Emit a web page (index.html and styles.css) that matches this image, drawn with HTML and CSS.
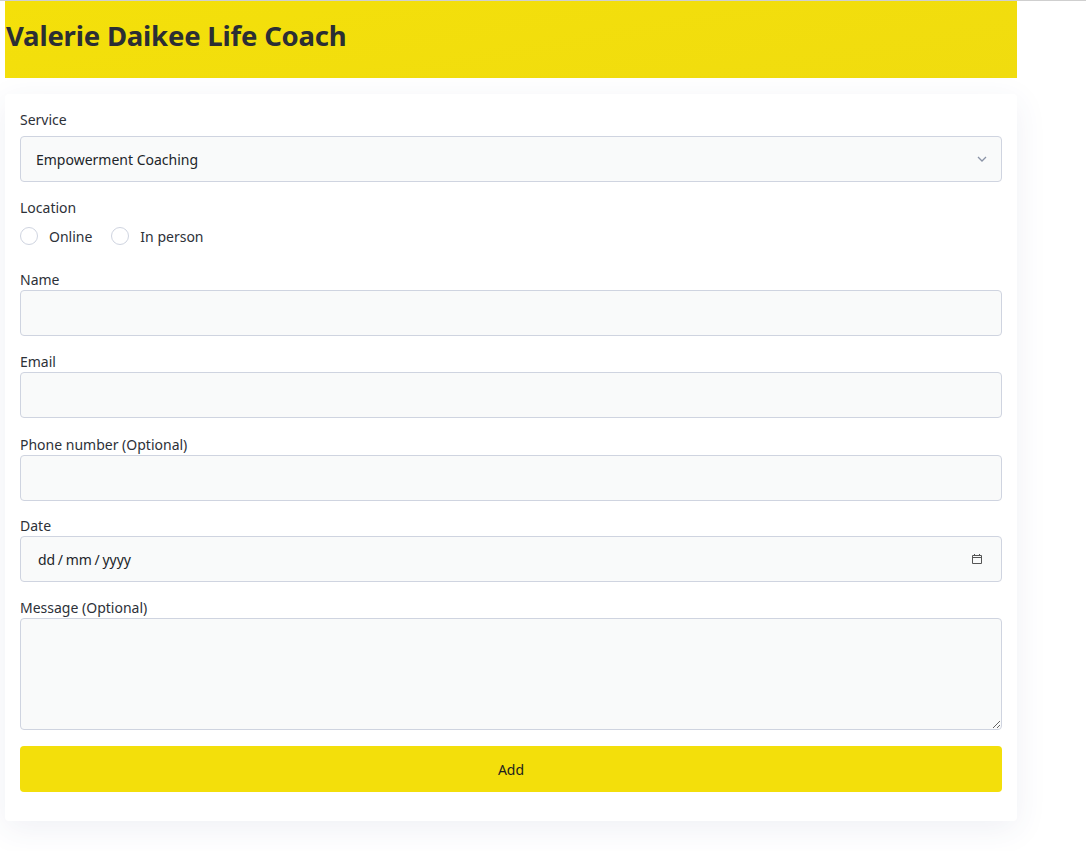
FILE: index.html
```html
<!DOCTYPE html>
<html lang="en">
<head>
<meta charset="utf-8">
<title>Valerie Daikee Life Coach</title>
<link rel="stylesheet" href="styles.css">
</head>
<body>
<div class="page">
  <header class="banner">
    <h1 class="title">Valerie Daikee Life Coach</h1>
  </header>
  <form class="card">
    <div class="group">
      <label class="label" for="service">Service</label>
      <div class="field-wrap select-wrap">
        <select id="service" class="control select">
          <option>Empowerment Coaching</option>
        </select>
        <svg class="chev" width="10" height="6" viewBox="0 0 10 6"><path d="M1 1l4 4 4-4" fill="none" stroke="#8a93a6" stroke-width="1.3"/></svg>
      </div>
    </div>
    <div class="group group-loc">
      <span class="label">Location</span>
      <div class="radios">
        <label class="radio"><input type="radio" name="loc"><span>Online</span></label>
        <label class="radio"><input type="radio" name="loc"><span>In person</span></label>
      </div>
    </div>
    <div class="group">
      <label class="label" for="name">Name</label>
      <input id="name" class="control" type="text">
    </div>
    <div class="group">
      <label class="label" for="email">Email</label>
      <input id="email" class="control" type="email">
    </div>
    <div class="group group-phone">
      <label class="label" for="phone">Phone number (Optional)</label>
      <input id="phone" class="control" type="tel">
    </div>
    <div class="group">
      <label class="label" for="date">Date</label>
      <div class="field-wrap">
        <input id="date" class="control date" type="text" placeholder="dd / mm / yyyy">
        <svg class="cal" width="12" height="12" viewBox="0 0 12 12"><path d="M1.5 2.5h9v8h-9z M1.5 4.5h9" fill="none" stroke="#555" stroke-width="1"/><path d="M3.5 1v2M8.5 1v2" stroke="#555" stroke-width="1"/></svg>
      </div>
    </div>
    <div class="group">
      <label class="label" for="msg">Message (Optional)</label>
      <textarea id="msg" class="control area"></textarea>
    </div>
    <button type="button" class="btn">Add</button>
  </form>
</div>
</body>
</html>
```
FILE: styles.css
```css
html, body { margin: 0; padding: 0; background: #fff; }
body {
  border-top: 1px solid #cfcfcf;
  font-family: "Noto Sans", "Open Sans", sans-serif;
  color: #212529;
  padding-bottom: 30px;
}
.page { width: 1012px; margin-left: 5px; }
.banner {
  height: 77px;
  background: linear-gradient(170deg, #f4e00a, #f0dc0f);
  display: flex;
  align-items: center;
}
.title {
  margin: 0 0 8px 1px;
  font-size: 27.5px;
  font-weight: 700;
  color: #2b2e34;
  letter-spacing: -0.2px;
}
.card {
  margin-top: 16px;
  background: #fff;
  border-radius: 4px;
  padding: 16px 15px 29px;
  box-shadow: 0 8px 32px rgba(50, 60, 130, 0.08);
  display: flex;
  flex-direction: column;
}
.group { display: flex; flex-direction: column; margin-bottom: 16px; }
.group-loc { margin-bottom: 24px; }
.group-phone { margin-top: 1px; margin-bottom: 15px; }
.label { font-size: 14px; line-height: 20px; color: #2d3138; }
.field-wrap { position: relative; }
.select-wrap { margin-top: 6px; }
.control {
  box-sizing: border-box;
  width: 100%;
  height: 46px;
  margin: 0;
  border: 1px solid #cfd4e0;
  border-radius: 4px;
  background: #f9fafa;
  padding: 0 15px;
  font-family: inherit;
  font-size: 14px;
  color: #212529;
  outline: none;
}
.select { appearance: none; -webkit-appearance: none; }
.chev { position: absolute; right: 15px; top: 20px; pointer-events: none; }
.date::placeholder { color: #212529; opacity: 1; }
.date { padding-left: 17px; word-spacing: -1px; }
.cal { position: absolute; right: 19px; top: 17px; pointer-events: none; }
.area { height: 112px; padding: 10px 15px; resize: vertical; display: block; }
.radios { display: flex; gap: 19px; margin-top: 8px; height: 20px; align-items: center; }
.radio { display: flex; align-items: center; gap: 11px; font-size: 14px; color: #2d3138; }
.radio input {
  appearance: none; -webkit-appearance: none;
  width: 18px; height: 18px; margin: 0;
  border: 1px solid #cfd4e0; border-radius: 50%;
  background: #fff;
}
.btn {
  height: 46px;
  border: 0;
  border-radius: 4px;
  background: #f3df0b;
  font-family: inherit;
  font-size: 14px;
  color: #1e1e1e;
  cursor: pointer;
}
```
